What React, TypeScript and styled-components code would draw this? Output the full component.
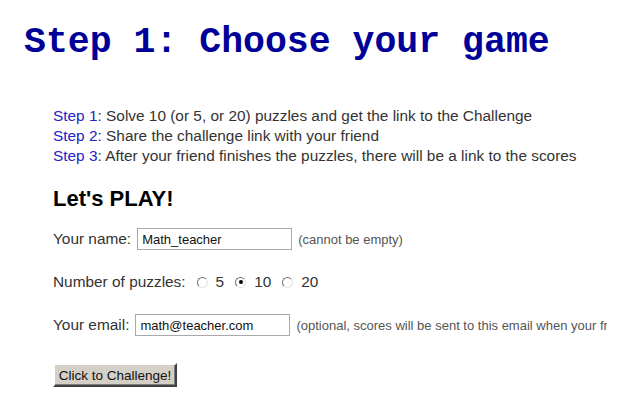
import styled, { createGlobalStyle } from 'styled-components';

const GlobalStyle = createGlobalStyle`
  body {
    margin: 0;
    background: #fff;
    font-family: "Liberation Sans", Arial, sans-serif;
  }
`;

const Page = styled.div`
  width: 607px;
  height: 400px;
  overflow: hidden;
  background: #fff;
`;

const Title = styled.h1`
  margin: 0;
  padding: 23px 0 0 24px;
  font-family: "Liberation Mono", "Courier New", monospace;
  font-size: 36.5px;
  line-height: 40px;
  font-weight: bold;
  color: #000099;
  white-space: nowrap;
`;

const Content = styled.div`
  padding-left: 53px;
`;

const Steps = styled.ul`
  list-style: none;
  margin: 43px 0 0;
  padding: 0;
  font-size: 15.4px;
  line-height: 20px;
  color: #333;
  white-space: nowrap;
`;

const StepLabel = styled.span`
  color: #2323c8;
`;

const PlayTitle = styled.h2`
  margin: 20px 0 0;
  font-size: 22px;
  line-height: 26px;
  font-weight: bold;
  color: #000;
`;

const Form = styled.form`
  margin-top: 16px;
  display: flex;
  flex-direction: column;
  gap: 21px;
`;

const Row = styled.div`
  display: flex;
  align-items: center;
  height: 22px;
  white-space: nowrap;
`;

const Label = styled.label`
  font-size: 15.4px;
  line-height: 22px;
  color: #333;
  margin-right: 6px;
`;

const TextInput = styled.input`
  box-sizing: border-box;
  width: 155px;
  height: 22px;
  padding: 0 4px;
  border: 1px solid #a9a9a9;
  font-family: "Liberation Sans", Arial, sans-serif;
  font-size: 13px;
  color: #111;
  background: #fff;
  outline: none;
`;

const Hint = styled.span`
  margin-left: 6px;
  font-size: 13px;
  color: #555;
`;

const RadioGroup = styled.div`
  display: flex;
  align-items: center;
  margin-left: 5px;
`;

const RadioOption = styled.label`
  display: flex;
  align-items: center;
  gap: 8px;
  margin-right: 11px;
  font-size: 15.4px;
  color: #333;
`;

const Radio = styled.input.attrs({ type: 'radio' })`
  appearance: none;
  box-sizing: border-box;
  width: 11px;
  height: 11px;
  margin: 0;
  border-radius: 50%;
  border: 1px solid;
  border-color: #707070 #e4e4e4 #e4e4e4 #707070;
  background: #fff;
  display: grid;
  place-items: center;

  &:checked::after {
    content: '';
    width: 4px;
    height: 4px;
    border-radius: 50%;
    background: #000;
  }
`;

const Submit = styled.button`
  margin-top: 6px;
  align-self: flex-start;
  box-sizing: border-box;
  width: 124px;
  height: 24px;
  padding: 0;
  background: #d4d0c8;
  border: 2px solid;
  border-color: #fff #404040 #404040 #fff;
  box-shadow: inset -1px -1px 0 #808080;
  font-family: "Liberation Sans", Arial, sans-serif;
  font-size: 13.5px;
  color: #111;
  white-space: nowrap;
`;

const steps = [
  ['Step 1', 'Solve 10 (or 5, or 20) puzzles and get the link to the Challenge'],
  ['Step 2', 'Share the challenge link with your friend'],
  ['Step 3', 'After your friend finishes the puzzles, there will be a link to the scores'],
];

const counts = [5, 10, 20];

const App = () => {
  return (
    <Page>
      <GlobalStyle />
      <Title>Step 1: Choose your game</Title>
      <Content>
        <Steps>
          {steps.map(([label, text]) => (
            <li key={label}>
              <StepLabel>{label}</StepLabel>: {text}
            </li>
          ))}
        </Steps>
        <PlayTitle>Let's PLAY!</PlayTitle>
        <Form onSubmit={(e) => e.preventDefault()}>
          <Row>
            <Label htmlFor="name">Your name:</Label>
            <TextInput id="name" defaultValue="Math_teacher" />
            <Hint>(cannot be empty)</Hint>
          </Row>
          <Row>
            <Label>Number of puzzles:</Label>
            <RadioGroup>
              {counts.map((n) => (
                <RadioOption key={n}>
                  <Radio name="count" value={n} defaultChecked={n === 10} />
                  {n}
                </RadioOption>
              ))}
            </RadioGroup>
          </Row>
          <Row>
            <Label htmlFor="email">Your email:</Label>
            <TextInput id="email" defaultValue="math@teacher.com" />
            <Hint>(optional, scores will be sent to this email when your friend finishes)</Hint>
          </Row>
          <Submit type="submit">Click to Challenge!</Submit>
        </Form>
      </Content>
    </Page>
  );
};

export default App;
